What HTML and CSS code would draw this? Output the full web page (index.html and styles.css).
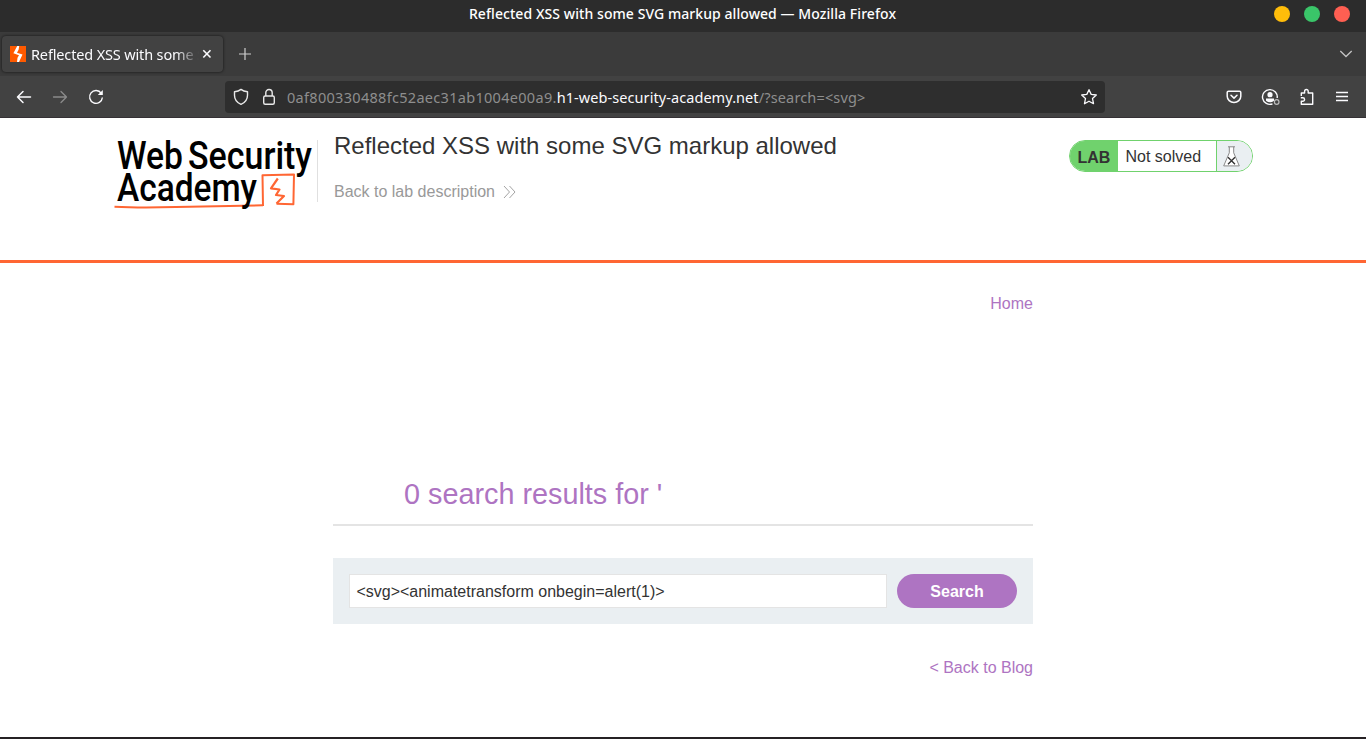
FILE: index.html
```html
<!DOCTYPE html>
<html lang="en">
<head>
<meta charset="utf-8">
<title>Reflected XSS with some SVG markup allowed</title>
<link rel="stylesheet" href="styles.css">
</head>
<body>
<div class="titlebar">
  <span class="window-title">Reflected XSS with some SVG markup allowed — Mozilla Firefox</span>
  <div class="window-buttons"><i class="dot yellow"></i><i class="dot green"></i><i class="dot red"></i></div>
</div>
<div class="tabs">
  <div class="tab">
    <svg class="favicon" width="16" height="16" viewBox="0 0 16 16"><path fill="#ff5a00" d="M0 0h16v16H0z"/><path fill="#fff" d="M7.200 0H9.200L8.600 3.800 7 6.800 12.500 8.600 9 16H7l.5-4.200L9 9.200 3.400 7.200z"/></svg>
    <span class="tab-title">Reflected XSS with some S</span>
    <svg class="tab-close" width="10" height="10" viewBox="0 0 10 10"><path d="M1.300 1.300l7.200 7.200M8.500 1.300L1.300 8.500" stroke="#fbfbfe" stroke-width="1.600"/></svg>
  </div>
  <svg class="new-tab" width="14" height="14" viewBox="0 0 14 14"><path d="M7 1v12M1 7h12" stroke="#cfcfcf" stroke-width="1.200"/></svg>
  <svg class="all-tabs" width="14" height="10" viewBox="0 0 14 10"><path d="M1.300 2l5.700 5.500L12.700 2" fill="none" stroke="#c4c4c4" stroke-width="1.300"/></svg>
</div>
<div class="toolbar">
  <div class="nav">
    <svg width="16" height="16" viewBox="0 0 16 16" fill="none" stroke="#fbfbfe" stroke-width="1.500" stroke-linecap="round" stroke-linejoin="round"><path d="M14.500 8H1.500M7 2.500L1.500 8 7 13.500"/></svg>
    <svg width="16" height="16" viewBox="0 0 16 16" fill="none" stroke="#8b8b8b" stroke-width="1.300" stroke-linecap="round" stroke-linejoin="round"><path d="M1.500 8h13M9 2.500L14.500 8 9 13.500"/></svg>
    <svg width="16" height="16" viewBox="0 0 16 16" fill="none" stroke="#fbfbfe" stroke-width="1.400"><path d="M13.300 4.300A6.400 6.400 0 1 0 14.400 8.500"/><path d="M14.800 1v5H9.800z" fill="#fbfbfe" stroke="none"/></svg>
  </div>
  <div class="urlbar">
    <svg width="16" height="18" viewBox="0 0 16 18" fill="none" stroke="#e8e8e8" stroke-width="1.400" stroke-linejoin="round"><path d="M8 1.400C6 3 3.500 3.600 1.500 3.800v3.400C1.500 11.500 4 14.600 8 16.300c4-1.700 6.500-4.800 6.500-9.100V3.800C12.500 3.600 10 3 8 1.400z"/></svg>
    <svg class="lock" width="14" height="18" viewBox="0 0 14 18" fill="none" stroke="#e8e8e8" stroke-width="1.400"><rect x="1.700" y="8" width="10.600" height="8.300" rx="1.500"/><path d="M3.800 8V4.700a3.200 3.200 0 0 1 6.400 0V8"/></svg>
    <span class="url"><span class="sub">0af800330488fc52aec31ab1004e00a9.</span><b>h1-web-security-academy.net</b><span class="path">/?search=&lt;svg&gt;</span></span>
    <svg class="star" width="18" height="18" viewBox="0 0 18 18" fill="none" stroke="#fbfbfe" stroke-width="1.300" stroke-linejoin="round"><path d="M9 1.700l2.200 4.700 5.100.6-3.800 3.500 1 5.200L9 13.200l-4.500 2.500 1-5.200L1.700 7l5.100-.6z"/></svg>
  </div>
  <div class="tools">
    <svg width="18" height="18" viewBox="0 0 18 18" fill="none" stroke="#fbfbfe" stroke-width="1.500" stroke-linecap="round" stroke-linejoin="round"><path d="M3.500 3.200h11a1.300 1.300 0 0 1 1.300 1.300v3.700a6.800 6.300 0 0 1-13.600 0V4.500a1.300 1.300 0 0 1 1.300-1.300zM6 7.200l3 2.900 3-2.900"/></svg>
    <svg width="20" height="18" viewBox="0 0 20 18" fill="none"><path d="M16.200 10A7.400 7.400 0 1 0 11.500 15.900" stroke="#fbfbfe" stroke-width="1.400"/><circle cx="9" cy="6.700" r="2.600" fill="#fbfbfe"/><path d="M5 10.600h8v2.200q-4 3-8 0z" fill="#fbfbfe"/><circle cx="15.700" cy="14" r="2.300" stroke="#bbb" stroke-width="1.200"/></svg>
    <svg width="18" height="18" viewBox="0 0 18 18" fill="none" stroke="#fbfbfe" stroke-width="1.400" stroke-linejoin="round"><path d="M3.300 8V5h3.300V3.300a1.800 1.800 0 0 1 3.600 0V5h4.500v11.300H3.300v-3h1.500a1.750 1.750 0 0 0 0-3.500H2.800"/></svg>
    <svg width="18" height="18" viewBox="0 0 18 18" stroke="#fbfbfe" stroke-width="1.400"><path d="M3 4.500h12M3 8.500h12M3 12.500h12"/></svg>
  </div>
</div>
<main class="page">
  <header class="lab-header">
    <svg class="logo" width="203" height="76" viewBox="0 0 203 76">
      <g fill="none" stroke="#ff6633" stroke-linejoin="round"><path stroke-width="2" d="M149 68L148.500 37.200 180 36.500 179.400 66.300 162.500 65.800"/><path stroke-width="2" d="M.5 68.700Q25 70 62 69L149 67.300"/><path stroke-width="2.200" d="M163.800 40.500L157 50.300l8.500 1.200-3.500 5.500 8 1-7.500 7.500"/></g>
      <g class="logo-text"><text x="3" y="30.500" textLength="66" lengthAdjust="spacingAndGlyphs">Web</text><text x="74" y="30.500" textLength="124" lengthAdjust="spacingAndGlyphs">Security</text><text x="3" y="63" textLength="140" lengthAdjust="spacingAndGlyphs">Academy</text></g>
    </svg>
    <div class="title-box">
      <h2>Reflected XSS with some SVG markup allowed</h2>
      <a class="lab-link">Back to lab description<svg width="13" height="14" viewBox="0 0 13 14" fill="none" stroke="#999" stroke-width=".9"><path d="M1 1l5.500 6L1 13M6.500 1L12 7l-5.500 6"/></svg></a>
    </div>
    <div class="status">
      <strong>LAB</strong><span>Not solved</span>
      <div class="flask"><svg width="17" height="21" viewBox="0 0 17 21"><path d="M5 .800h7M6.300.800v6L.700 19.900h15.600L10.700 6.800v-6" fill="#fff" stroke="#888"/><path d="M5 11.200l7 7M12 11.200l-7 7" stroke="#333" stroke-width="1.400"/></svg></div>
    </div>
  </header>
  <div class="content">
    <nav class="home"><a>Home</a></nav>
    <h1>0 search results for '</h1>
    <div class="search"><input type="text" value="&lt;svg&gt;&lt;animatetransform onbegin=alert(1)&gt;"><button>Search</button></div>
    <div class="back"><a>&lt; Back to Blog</a></div>
  </div>
</main>
</body>
</html>
```
FILE: styles.css
```css
* { box-sizing: border-box; }
body { margin: 0; height: 739px; overflow: hidden; background: #fff; color: #333; font: 16px "Liberation Sans", Arial, sans-serif; }
svg { display: block; flex: none; }

.titlebar { height: 32px; background: #2c2c2c; display: grid; grid-template-columns: 1fr auto 1fr; align-items: center; color: #fff; padding-right: 16px; padding-left: 15px; }
.window-title { grid-column: 2; font: 500 14px/28px "Noto Sans", sans-serif; letter-spacing: .07px; height: 32px; }
.window-buttons { display: flex; gap: 14px; justify-content: flex-end; padding-bottom: 4px; }
.dot { width: 16px; height: 16px; border-radius: 50%; }
.yellow { background: #ffbd0a; }
.green { background: #3ac569; }
.red { background: #ff5f52; }

.tabs { height: 44px; background: #3b3b3b; display: flex; align-items: center; padding: 0 13px 0 2px; }
.tab { width: 221px; height: 36px; border-radius: 4px; background: #424242; box-shadow: 0 0 3px rgba(0,0,0,.7); display: flex; align-items: center; padding: 0 11px 0 8px; }
.tab-title { width: 168px; margin-left: 5px; overflow: hidden; white-space: nowrap; color: #fbfbfe; font: 14.500px/24px "Noto Sans", sans-serif; letter-spacing: -.15px; -webkit-mask-image: linear-gradient(90deg, #000 86%, transparent); mask-image: linear-gradient(90deg, #000 86%, transparent); }
.tab-close { margin-left: auto; }
.new-tab { margin-left: 15px; }
.all-tabs { margin-left: auto; }

.toolbar { height: 42px; background: #424242; border-bottom: 1px solid #353135; display: flex; align-items: center; padding: 0 16px; }
.nav { display: flex; gap: 20px; width: 209px; }
.urlbar { width: 880px; height: 32px; border-radius: 4px; background: #2e2e2e; display: flex; align-items: center; padding: 0 7px 0 8px; }
.lock { margin-left: 13px; }
.url { margin-left: 11px; color: #8e8e8e; font: 14.500px/32px "Noto Sans", sans-serif; white-space: nowrap; }
.url b { color: #fbfbfe; font-weight: 400; letter-spacing: .07px; }
.sub { letter-spacing: .3px; }
.path { letter-spacing: .15px; }
.star { margin-left: auto; }
.tools { margin-left: auto; display: flex; align-items: center; gap: 18px; }
.tools svg + svg { margin-right: -1px; }

.page { height: 621px; border-bottom: 2px solid #252124; }
.lab-header { height: 145px; border-bottom: 3px solid #ff6633; display: flex; align-items: flex-start; padding: 12px 113px 0 114px; }
.logo { margin-top: 8px; overflow: visible; }
.logo-text { font: 500 38px Roboto, sans-serif; fill: #000; }
.title-box { margin-top: 10px; height: 62px; border-left: 1px solid #e0e0e0; padding-left: 16px; }
.title-box h2 { margin: -8px 0 0; font-size: 24px; font-weight: 400; line-height: 28px; white-space: nowrap; }
.lab-link { margin-top: 22px; color: #999; display: flex; align-items: center; gap: 8px; line-height: 20px; }
.status { margin: 10px 0 0 auto; width: 184px; height: 32px; display: flex; border: 1px solid #70d26d; border-radius: 16px; overflow: hidden; line-height: 32px; }
.status strong { width: 48px; background: #70d26d; padding-left: 7.500px; line-height: 33px; }
.status span { width: 98px; padding-left: 7.500px; }
.flask { flex: 1; background: #eaeff2; border-left: 1px solid #70d26d; padding: 5px 0 0 6px; }

.content { width: 700px; margin: 0 auto; color: #ae74c2; }
.home { text-align: right; padding-top: 31px; line-height: 20px; }
.content h1 { margin: 162px 0 0; padding-left: 71px; height: 50px; font-size: 28.800px; font-weight: 400; line-height: 36px; border-bottom: 2px solid #e4e4e4; }
.search { margin-top: 32px; height: 66px; background: #eaeff2; padding: 16px; display: flex; gap: 10px; }
.search input { flex: 1; min-width: 0; height: 34px; border: 1px solid #e4e4e4; background: #fff; color: #333; padding: 1px 6.400px 0; font: 16px "Liberation Sans", Arial, sans-serif; }
.search button { width: 120px; border: 0; border-radius: 17px; background: #ae74c2; color: #fff; padding: 2px 6px 0; font: bold 16px "Liberation Sans", Arial, sans-serif; }
.back { text-align: right; margin-top: 34px; line-height: 20px; }
```
